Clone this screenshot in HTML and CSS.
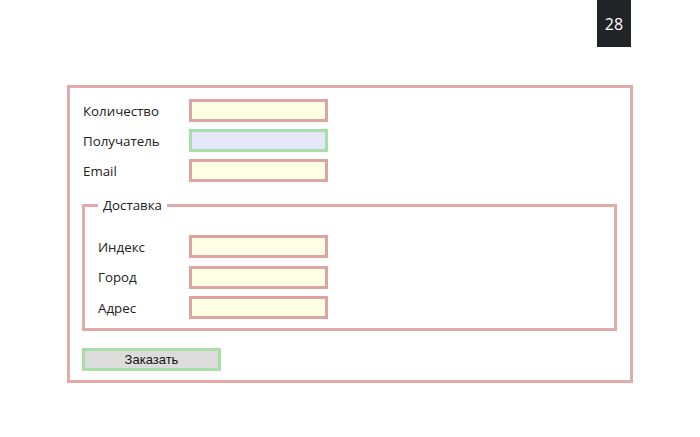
FILE: index.html
```
<!DOCTYPE html>
<html lang="ru">
<head>
<meta charset="utf-8">
<title>Заказ</title>
<link rel="stylesheet" href="styles.css">
</head>
<body>
<header class="top">
  <div class="badge">28</div>
</header>
<form class="order">
  <div class="row"><label class="lbl">Количество</label><input class="field" type="text"></div>
  <div class="row"><label class="lbl">Получатель</label><input class="field field-ok" type="text"></div>
  <div class="row"><label class="lbl">Email</label><input class="field" type="text"></div>
  <fieldset class="group">
    <legend class="legend">Доставка</legend>
    <div class="row row-in"><label class="lbl lbl-in">Индекс</label><input class="field" type="text"></div>
    <div class="row row-in"><label class="lbl lbl-in">Город</label><input class="field" type="text"></div>
    <div class="row row-in"><label class="lbl lbl-in">Адрес</label><input class="field" type="text"></div>
  </fieldset>
  <button class="submit" type="button">Заказать</button>
</form>
</body>
</html>
```
FILE: styles.css
```
html, body {
  margin: 0;
  padding: 0;
  background: #fff;
}
body {
  font-family: "Open Sans", "Noto Sans", sans-serif;
  font-size: 13.3px;
  color: #222;
  width: 700px;
  height: 437px;
  overflow: hidden;
}
.top {
  display: flex;
  justify-content: flex-end;
  padding-right: 69px;
}
.badge {
  width: 34px;
  height: 47px;
  background: #222326;
  color: #fff;
  font-size: 16px;
  display: flex;
  align-items: center;
  justify-content: center;
}
.order {
  box-sizing: border-box;
  margin: 38px 0 0 67px;
  width: 566px;
  border: 3px solid #e4aaaa;
  padding: 11px 13px 9px 12px;
  display: flex;
  flex-direction: column;
  align-items: flex-start;
}
.row {
  display: flex;
  align-items: center;
  height: 23px;
  margin-bottom: 7px;
}
.row:nth-of-type(3) { margin-bottom: 0; }
.lbl {
  width: 107px;
  padding-left: 1px;
  box-sizing: border-box;
  line-height: 18px;
}
.field {
  box-sizing: border-box;
  width: 139px;
  height: 23px;
  margin: 0;
  border: 3px solid #dea3a3;
  background: #ffffe3;
  outline: none;
  padding: 0;
}
.field-ok {
  border-color: #a8dfa8;
  background: #e6e6fa;
}
.group {
  box-sizing: border-box;
  align-self: stretch;
  margin: 14px 0 0 0;
  border: 3px solid #e4aaaa;
  padding: 21px 13px 9px 13px;
  min-width: 0;
}
.legend {
  padding: 0 5px;
  line-height: 18px;
  font-size: 13.3px;
}
.row-in {
  margin-bottom: 7.5px;
}
.row-in:last-child { margin-bottom: 0; }
.lbl-in {
  width: 91px;
  padding-left: 0;
}
.submit {
  box-sizing: border-box;
  margin-top: 17px;
  width: 139px;
  height: 23px;
  border: 3px solid #a8dfa8;
  background: #dcdcdc;
  font-family: "Liberation Sans", Arial, sans-serif;
  font-size: 13px;
  color: #111;
  padding: 0;
}
```
